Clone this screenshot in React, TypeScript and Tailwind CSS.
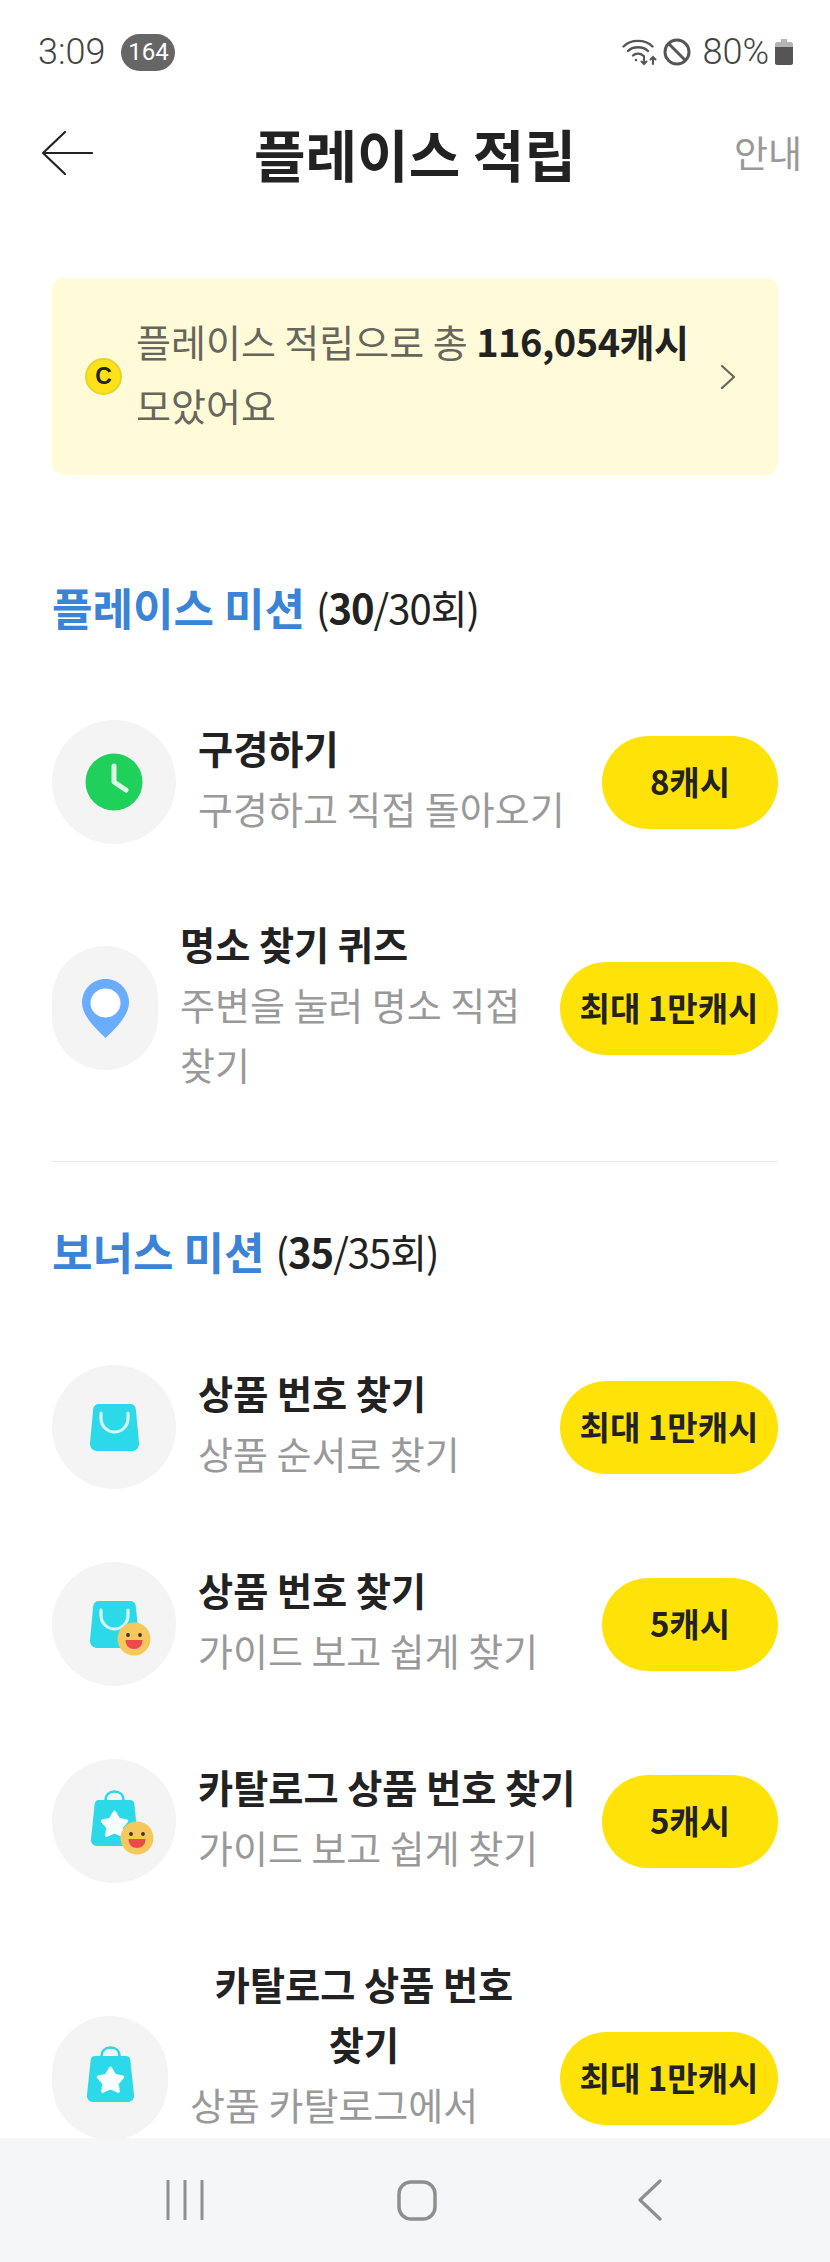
const Bag = () => (
  <svg width="49" height="47" viewBox="0 0 49 47">
    <path d="M9 0H40C43.500 0 45.500 2 45.800 5L49 39C49.400 43.500 46.500 47 42 47H7C2.500 47 -0.400 43.500 0 39L3.200 5C3.500 2 5.500 0 9 0Z" fill="#2bd9e8" />
    <path d="M11 9V14C11 22 17 28 24.500 28C32 28 38 22 38 14V9" fill="none" stroke="#d6f8fb" strokeWidth="3.200" strokeLinecap="round" />
  </svg>
);

const Smile = () => (
  <svg width="34" height="34" viewBox="0 0 34 34">
    <circle cx="17" cy="17" r="16.500" fill="#f6c75b" />
    <circle cx="11" cy="13" r="1.900" fill="#333333" />
    <circle cx="23" cy="13" r="1.900" fill="#333333" />
    <path d="M8.500 18H25.500C25.500 24 21.500 27 17 27C12.500 27 8.500 24 8.500 18Z" fill="#ea4a4a" />
  </svg>
);

const StarBag = () => (
  <svg width="47" height="56" viewBox="0 0 47 56">
    <path d="M14.500 12V10C14.500 5 18 1.500 23.500 1.500C29 1.500 32.500 5 32.500 10V12" fill="none" stroke="#2bd9e8" strokeWidth="2.600" />
    <path d="M8 10H39C41.500 10 43 11.500 43.300 14L47 49C47.300 53 45 56 41 56H6C2 56 -0.300 53 0 49L3.700 14C4 11.500 5.500 10 8 10Z" fill="#2bd9e8" />
    <path d="M23.500 22L27.800 29.300L35.800 31L30.300 37.200L31.300 45.500L23.500 42L15.700 45.500L16.700 37.200L11.200 31L19.200 29.300Z" fill="#f6feff" stroke="#f6feff" strokeWidth="3" strokeLinejoin="round" />
  </svg>
);

const Clock = () => (
  <svg width="58" height="58" viewBox="0 0 58 58">
    <circle cx="29" cy="29" r="28.500" fill="#1fd15a" />
    <path d="M29 13V29L41 37" fill="none" stroke="#dcf8e4" strokeWidth="5" strokeLinecap="round" strokeLinejoin="round" />
  </svg>
);

const Pin = () => (
  <svg width="47" height="59" viewBox="0 0 47 59">
    <path d="M23.500 0C36.500 0 47 10.500 47 23.500C47 36 35 48 23.500 59C12 48 0 36 0 23.500C0 10.500 10.500 0 23.500 0Z" fill="#6aadff" />
    <ellipse cx="23.500" cy="24" rx="15" ry="14.500" fill="#ffffff" />
  </svg>
);

type Row = {
  icon: React.ReactNode;
  iconClass: string;
  title: string;
  sub: string;
  cta: string;
  ctaClass: string;
  rowClass: string;
  center?: boolean;
};

const Mission = ({ icon, iconClass, title, sub, cta, ctaClass, rowClass, center }: Row) => (
  <div className={`flex items-center ${rowClass}`}>
    <div className={`flex h-[124px] shrink-0 items-center justify-center rounded-full bg-[#f4f4f4] ${iconClass}`}>{icon}</div>
    <div className="-mt-[4px] mb-[4px] ml-[22px] min-w-0 flex-1 break-keep text-[38px] leading-[60px]">
      <div className={`text-[38.200px] font-bold text-[#222222] ${center ? "text-center" : ""}`}>{title}</div>
      <div className="text-[#999999]">{sub}</div>
    </div>
    <div className={`ml-[22px] flex h-[93px] shrink-0 items-center justify-center rounded-full bg-[#ffe308] text-[33px] font-bold text-[#222222] ${ctaClass}`}>
      {cta}
    </div>
  </div>
);

const Heading = ({ title, done, total, className }: { title: string; done: number; total: string; className: string }) => (
  <div className={`flex h-[60px] items-center pb-[6px] ${className}`}>
    <span className="text-[44px] font-bold text-[#3a83d6]">{title}</span>
    <span className="ml-[11px] text-[40px] tracking-[-1px] text-[#222222]">
      (<b>{done}</b>/{total})
    </span>
  </div>
);

export default function App() {
  return (
    <div className="flex h-[2262px] w-[830px] flex-col overflow-hidden bg-white font-['Noto_Sans_CJK_KR',sans-serif]">
      <div className="min-h-0 flex-1 overflow-hidden">
        <div className="flex h-[104px] items-center pl-[38px] pr-[37px] font-['Roboto',sans-serif] text-[36px] font-light text-[#444444]">
          <span>3:09</span>
          <span className="ml-[16px] flex h-[37px] w-[54px] items-center justify-center rounded-full bg-[#666666] text-[24px] font-normal text-white">164</span>
          <div className="ml-auto flex items-center">
            <svg width="36" height="28" viewBox="0 0 36 28" fill="none" stroke="#555555" strokeWidth="2.400" strokeLinecap="round">
              <path d="M1.500 8.500C9 1 23 1 30.500 8.500" />
              <path d="M6 13C11 8 21 8 26 13" />
              <path d="M11 17.500C13.500 15 18.500 15 21 17.500" />
              <circle cx="14" cy="22" r="1.300" fill="#555555" stroke="none" />
              <path d="M22 18V26M19.500 23.500L22 26L24.500 23.500" strokeWidth="2" />
              <path d="M31 26V19M28.500 21.500L31 19L33.500 21.500" strokeWidth="2" />
            </svg>
            <svg className="ml-[5px]" width="28" height="28" viewBox="0 0 28 28" fill="none" stroke="#555555" strokeWidth="3">
              <circle cx="14" cy="14" r="12" />
              <path d="M5.500 5.500L22.500 22.500" />
            </svg>
            <span className="ml-[11px]">80%</span>
            <svg className="ml-[6px]" width="18" height="26" viewBox="0 0 18 26">
              <path d="M6 0H12V3H16C17 3 18 4 18 5V8H0V5C0 4 1 3 2 3H6Z" fill="#b5b5b5" />
              <path d="M0 8H18V24C18 25 17 26 16 26H2C1 26 0 25 0 24Z" fill="#555555" />
            </svg>
          </div>
        </div>

        <div className="grid h-[98px] grid-cols-[1fr_auto_1fr] items-center px-[28px]">
          <svg className="ml-[13px]" width="52" height="44" viewBox="0 0 52 44" fill="none" stroke="#222222" strokeWidth="2.200" strokeLinecap="round" strokeLinejoin="round">
            <path d="M24 1L2 22L24 43M2 22H51" />
          </svg>
          <div className="text-[56px] font-bold text-[#222222]">플레이스 적립</div>
          <div className="text-right text-[37px] text-[#999999]">안내</div>
        </div>

        <div className="mx-[52px] mt-[76px] flex h-[197px] items-center rounded-[12px] bg-[#fffad8] pl-[33px] pr-[42px]">
          <div className="flex h-[37px] w-[37px] shrink-0 items-center justify-center rounded-full border-2 border-[#e6d52e] bg-[#ffe11a] font-['Liberation_Sans',sans-serif] text-[23px] font-bold leading-none text-[#222222]">
            C
          </div>
          <div className="-mt-[4px] mb-[4px] ml-[14px] min-w-0 flex-1 break-keep text-[38px] leading-[64px] text-[#66665c]">
            플레이스 적립으로 총 <b className="tracking-[-0.500px] text-[#222222]">116,054캐시</b> 모았어요
          </div>
          <svg width="16" height="24" viewBox="0 0 16 24" fill="none" stroke="#66665c" strokeWidth="2.200" strokeLinecap="round" strokeLinejoin="round">
            <path d="M2 1L14 12L2 23" />
          </svg>
        </div>

        <Heading className="mx-[52px] mt-[105px]" title="플레이스 미션" done={30} total="30회" />
        <div className="mx-[52px] mt-[80px]">
          <Mission icon={<Clock />} iconClass="w-[124px]" title="구경하기" sub="구경하고 직접 돌아오기" cta="8캐시" ctaClass="w-[176px]" rowClass="" />
          <Mission icon={<Pin />} iconClass="w-[106px]" title="명소 찾기 퀴즈" sub="주변을 눌러 명소 직접 찾기" cta="최대 1만캐시" ctaClass="w-[218px]" rowClass="mt-[74px]" />
        </div>
        <div className="mx-[52px] mt-[63px] h-px bg-[#e8e8e8]" />

        <Heading className="mx-[52px] mt-[62px]" title="보너스 미션" done={35} total="35회" />
        <div className="mx-[52px] mt-[81px]">
          <Mission icon={<Bag />} iconClass="w-[124px]" title="상품 번호 찾기" sub="상품 순서로 찾기" cta="최대 1만캐시" ctaClass="w-[218px]" rowClass="" />
          <Mission
            icon={
              <div className="relative h-[47px] w-[49px]">
                <Bag />
                <div className="absolute left-[27px] top-[21px]"><Smile /></div>
              </div>
            }
            iconClass="w-[124px]"
            title="상품 번호 찾기"
            sub="가이드 보고 쉽게 찾기"
            cta="5캐시"
            ctaClass="w-[176px]"
            rowClass="mt-[73px]"
          />
          <Mission
            icon={
              <div className="relative mb-[7px] h-[56px] w-[47px]">
                <StarBag />
                <div className="absolute left-[29px] top-[31px]"><Smile /></div>
              </div>
            }
            iconClass="w-[124px]"
            title="카탈로그 상품 번호 찾기"
            sub="가이드 보고 쉽게 찾기"
            cta="5캐시"
            ctaClass="w-[176px]"
            rowClass="mt-[73px]"
          />
          <Mission
            icon={<div className="mb-[9px]"><StarBag /></div>}
            iconClass="w-[116px]"
            title="카탈로그 상품 번호 찾기"
            sub="상품 카탈로그에서 찾기"
            cta="최대 1만캐시"
            ctaClass="w-[218px]"
            rowClass="mt-[75px]"
            center
          />
        </div>
      </div>

      <div className="flex h-[124px] shrink-0 items-center justify-between bg-[#f5f6f8] pl-[166px] pr-[168px]">
        <svg width="38" height="40" viewBox="0 0 38 40" stroke="#8f8f8f" strokeWidth="3" fill="none">
          <path d="M2 0V40M19 0V40M36 0V40" />
        </svg>
        <svg className="-ml-[8px]" width="40" height="41" viewBox="0 0 40 41" stroke="#8f8f8f" strokeWidth="3.500" fill="none">
          <rect x="2" y="2" width="36" height="37" rx="12" />
        </svg>
        <svg width="24" height="42" viewBox="0 0 24 42" stroke="#8f8f8f" strokeWidth="3.200" fill="none" strokeLinecap="round" strokeLinejoin="round">
          <path d="M22 2L2 21L22 40" />
        </svg>
      </div>
    </div>
  );
}
